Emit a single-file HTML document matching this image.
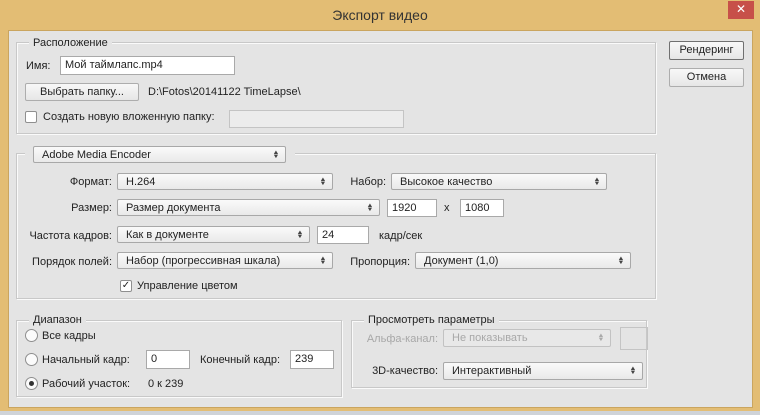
<!DOCTYPE html>
<html><head><meta charset="utf-8"><style>
*{box-sizing:border-box;margin:0;padding:0}
body{width:760px;height:415px;background:#cfd3d8;font-family:"Liberation Sans","DejaVu Sans",sans-serif;font-size:11px;color:#222;position:relative;overflow:hidden}
.frame{position:absolute;left:0;top:0;width:760px;height:411px;background:#e3bd74}
.body{position:absolute;left:8px;top:30px;width:745px;height:378px;background:#e4e4e4;border:1px solid #caa55f}
.a{position:absolute;white-space:nowrap}
.t{position:absolute;white-space:nowrap;line-height:14px}
.r{position:absolute;white-space:nowrap;line-height:14px;text-align:right}
.grp{position:absolute;border:1px solid #c8c8c8;box-shadow:1px 1px 0 #fafafa inset,1px 1px 0 #fafafa}
.leg{position:absolute;background:#e4e4e4;padding:0 4px;line-height:14px}
.inp{position:absolute;background:#fff;border:1px solid #a9a9a9;padding-left:4px;line-height:17px}
.sel{position:absolute;background:linear-gradient(#fafafa,#e9e9e9);border:1px solid #a8a8a8;border-radius:2px;padding-left:8px;line-height:16px}
.sel i{position:absolute;right:6px;top:4px;font-style:normal;font-size:6px;line-height:4px;color:#444;transform:scaleX(1.2)}
.btn{position:absolute;background:linear-gradient(#f8f8f8,#e6e6e6);border:1px solid #adadad;border-radius:2px;text-align:center;line-height:17px}
.cb{position:absolute;width:12px;height:12px;border:1px solid #8f8f8f;background:#fff;border-radius:2px}
.rd{position:absolute;width:13px;height:13px;border:1px solid #8f8f8f;background:#fbfbfb;border-radius:50%}
.dis{color:#a8a8a8}
</style></head><body>
<div class="frame"></div>
<div class="a" style="left:0;top:7px;width:760px;text-align:center;font-size:14px;color:#333">Экспорт видео</div>
<div class="a" style="left:728px;top:1px;width:26px;height:18px;background:#c75049;color:#fff;text-align:center;font-size:12px;line-height:17px">✕</div>
<div class="body"></div>

<div class="grp" style="left:16px;top:42px;width:640px;height:92px"></div>
<div class="leg" style="left:29px;top:36px">Расположение</div>
<div class="t" style="left:26px;top:59px">Имя:</div>
<div class="inp" style="left:60px;top:56px;width:175px;height:19px">Мой таймлапс.mp4</div>
<div class="btn" style="left:25px;top:83px;width:114px;height:18px">Выбрать папку...</div>
<div class="t" style="left:148px;top:85px">D:\Fotos\20141122 TimeLapse\</div>
<div class="cb" style="left:25px;top:111px"></div>
<div class="t" style="left:43px;top:110px">Создать новую вложенную папку:</div>
<div class="inp" style="left:229px;top:110px;width:175px;height:18px;background:#ececec;border-color:#c4c4c4"></div>

<div class="grp" style="left:16px;top:153px;width:640px;height:146px"></div>
<div class="a" style="left:25px;top:145px;width:270px;height:20px;background:#e4e4e4"></div>
<div class="sel" style="left:33px;top:146px;width:253px;height:17px">Adobe Media Encoder<i>▲<br>▼</i></div>

<div class="r" style="right:648px;top:175px">Формат:</div>
<div class="sel" style="left:117px;top:173px;width:216px;height:17px">H.264<i>▲<br>▼</i></div>
<div class="r" style="right:374px;top:175px">Набор:</div>
<div class="sel" style="left:391px;top:173px;width:216px;height:17px">Высокое качество<i>▲<br>▼</i></div>

<div class="r" style="right:648px;top:201px">Размер:</div>
<div class="sel" style="left:117px;top:199px;width:263px;height:17px">Размер документа<i>▲<br>▼</i></div>
<div class="inp" style="left:387px;top:199px;width:50px;height:18px">1920</div>
<div class="t" style="left:444px;top:201px">x</div>
<div class="inp" style="left:460px;top:199px;width:44px;height:18px">1080</div>

<div class="r" style="right:648px;top:229px">Частота кадров:</div>
<div class="sel" style="left:117px;top:226px;width:193px;height:17px">Как в документе<i>▲<br>▼</i></div>
<div class="inp" style="left:317px;top:226px;width:52px;height:18px">24</div>
<div class="t" style="left:379px;top:229px">кадр/сек</div>

<div class="r" style="right:648px;top:255px">Порядок полей:</div>
<div class="sel" style="left:117px;top:252px;width:216px;height:17px">Набор (прогрессивная шкала)<i>▲<br>▼</i></div>
<div class="r" style="right:350px;top:255px">Пропорция:</div>
<div class="sel" style="left:415px;top:252px;width:216px;height:17px">Документ (1,0)<i>▲<br>▼</i></div>

<div class="cb" style="left:120px;top:280px;font-size:10px;line-height:10px;text-align:center">✓</div>
<div class="t" style="left:137px;top:279px">Управление цветом</div>

<div class="grp" style="left:16px;top:320px;width:326px;height:77px"></div>
<div class="leg" style="left:29px;top:313px">Диапазон</div>
<div class="rd" style="left:25px;top:329px"></div>
<div class="t" style="left:42px;top:329px">Все кадры</div>
<div class="rd" style="left:25px;top:353px"></div>
<div class="t" style="left:42px;top:353px">Начальный кадр:</div>
<div class="inp" style="left:146px;top:350px;width:44px;height:19px">0</div>
<div class="t" style="left:200px;top:353px">Конечный кадр:</div>
<div class="inp" style="left:290px;top:350px;width:44px;height:19px">239</div>
<div class="rd" style="left:25px;top:377px"><div style="position:absolute;left:3px;top:3px;width:5px;height:5px;border-radius:50%;background:#333"></div></div>
<div class="t" style="left:42px;top:377px">Рабочий участок:</div>
<div class="t" style="left:148px;top:377px">0 к 239</div>

<div class="grp" style="left:351px;top:320px;width:296px;height:68px"></div>
<div class="leg" style="left:364px;top:313px">Просмотреть параметры</div>
<div class="r dis" style="right:322px;top:332px">Альфа-канал:</div>
<div class="sel dis" style="left:443px;top:329px;width:168px;height:18px;background:#e8e8e8;border-color:#c2c2c2">Не показывать<i style="color:#aaa">▲<br>▼</i></div>
<div class="a" style="left:620px;top:327px;width:28px;height:23px;border:1px solid #c4c4c4"></div>
<div class="r" style="right:322px;top:364px">3D-качество:</div>
<div class="sel" style="left:443px;top:362px;width:200px;height:18px">Интерактивный<i>▲<br>▼</i></div>

<div class="btn" style="left:669px;top:41px;width:75px;height:19px;border-color:#707070">Рендеринг</div>
<div class="btn" style="left:669px;top:68px;width:75px;height:19px">Отмена</div>
</body></html>
